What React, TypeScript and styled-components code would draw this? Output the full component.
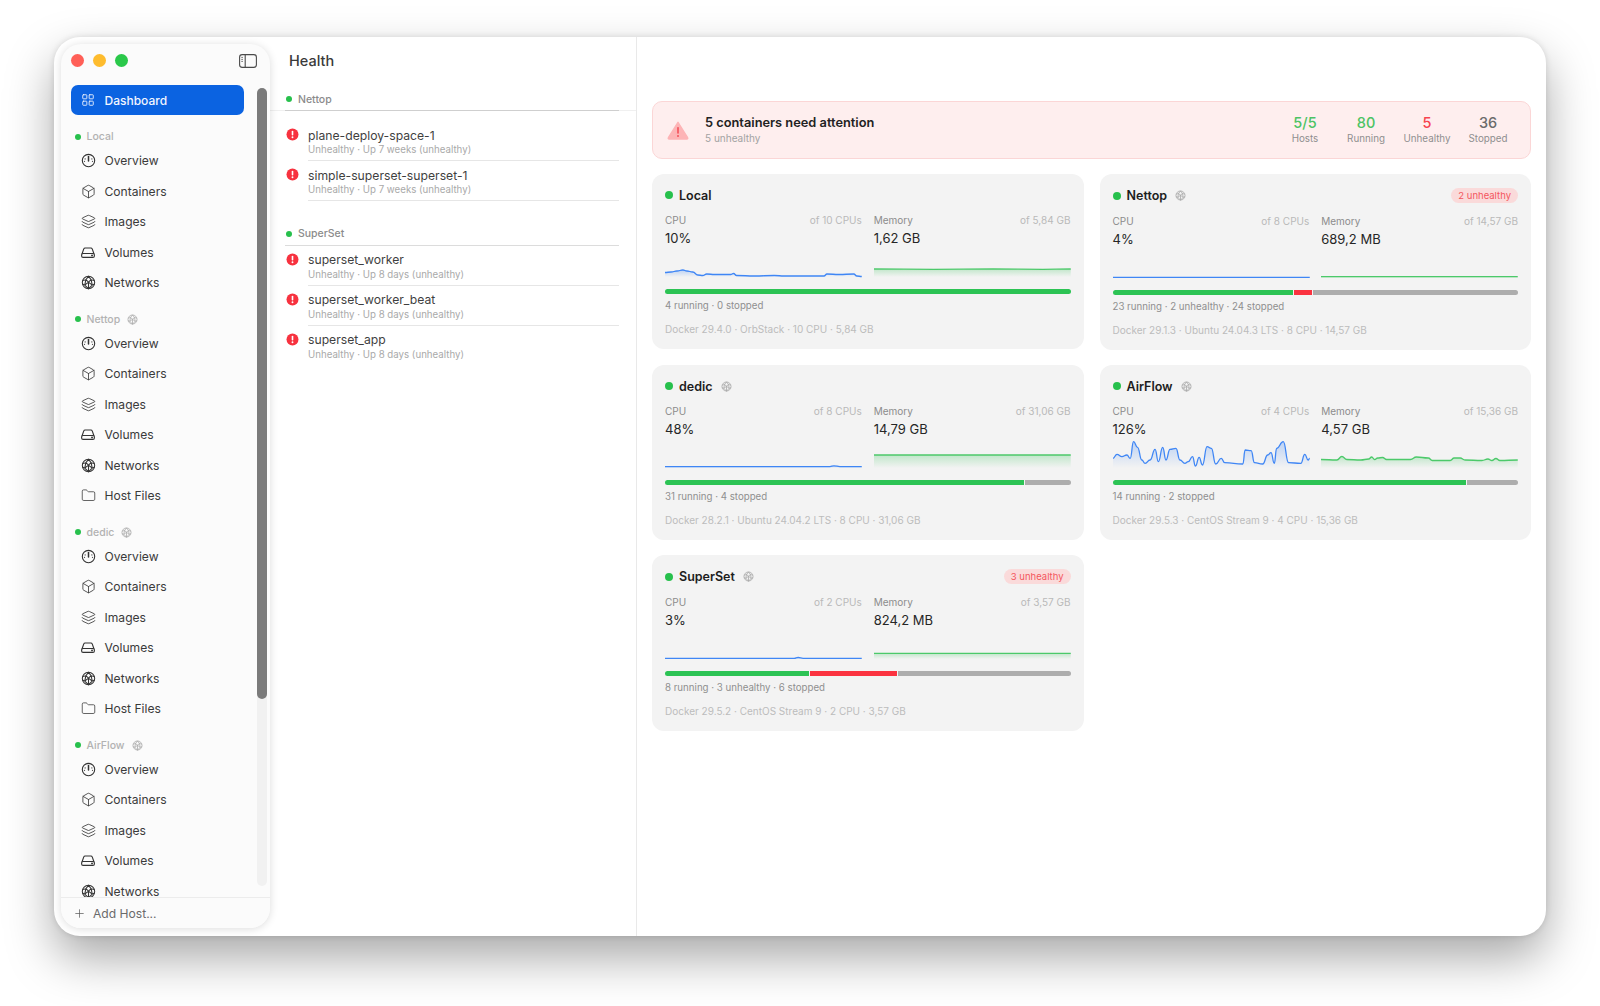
import React from "react";
import styled, { createGlobalStyle } from "styled-components";
import { Box, Folder, Layers, LayoutGrid, Plus } from "lucide-react";

const GlobalStyle = createGlobalStyle`
  html, body { margin: 0; padding: 0; background: #fff; }
  body { font-family: Inter, "Noto Sans", "Liberation Sans", sans-serif; -webkit-font-smoothing: antialiased; }
`;

type Point = [number, number];

// sparkline boxes are 198x26, segments get horizontal tangents so peaks stay where they are
const toPath = (pts: Point[]) =>
  pts
    .map((p, i) => {
      if (i === 0) return `M${p[0]} ${p[1]}`;
      const prev = pts[i - 1];
      const mid = (prev[0] + p[0]) / 2;
      return `C${mid} ${prev[1]} ${mid} ${p[1]} ${p[0]} ${p[1]}`;
    })
    .join(" ");

const flat = (y: number, bumps: Point[] = []): Point[] => [[0, y], ...bumps, [198, y]];

const airflowCpu: Point[] = ([
  [98, 295], [110, 283], [125, 290], [140, 285], [150, 295], [160, 245], [172, 262], [185, 300], [195, 310], [210, 300],
  [225, 268], [235, 305], [248, 262], [258, 300], [270, 268], [288, 265], [300, 300], [315, 310], [325, 305], [338, 290],
  [347, 318], [358, 292], [368, 315], [382, 260], [395, 265], [408, 312], [425, 295], [435, 308], [490, 312], [497, 270],
  [515, 272], [525, 308], [550, 312], [565, 285], [575, 278], [585, 310], [592, 265], [612, 245], [628, 308], [665, 310],
  [677, 283], [687, 300], [692, 295],
] as Point[]).map(([x, y]) => [(x - 98) / 3, (y - 246) / 3]);

const airflowMem: Point[] = [
  [0, 17.5], [16, 18], [21, 14.5], [26, 17.5], [40, 18], [48, 17], [51, 15], [54, 17.5], [57, 16], [62, 15.5], [66, 17.5],
  [90, 17.5], [96, 15], [108, 16], [112, 18.5], [130, 18.5], [134, 16], [140, 16], [145, 18], [162, 18.5], [168, 17],
  [172, 18.5], [176, 16.5], [180, 18.5], [198, 18],
];

const localCpu: Point[] = [
  [0, 21.5], [6, 21], [12, 20], [18, 19], [22, 20], [28, 21], [33, 24], [38, 24.5], [42, 23], [50, 23.5], [66, 23.5], [69, 22.5],
  [72, 24.5], [90, 25], [110, 24.5], [120, 25], [160, 25], [163, 23], [175, 23.5], [190, 23], [193, 25], [198, 25.5],
];

const hosts = [
  {
    name: "Local", remote: false, cpu: "10%", cpuOf: "of 10 CPUs", mem: "1,62 GB", memOf: "of 5,84 GB",
    cpuLine: localCpu, memLine: flat(18, [[60, 18.3], [120, 18], [170, 18.3]]),
    bar: [1, 0, 0], summary: "4 running · 0 stopped", info: "Docker 29.4.0 · OrbStack · 10 CPU · 5,84 GB", badge: "",
  },
  {
    name: "Nettop", remote: true, cpu: "4%", cpuOf: "of 8 CPUs", mem: "689,2 MB", memOf: "of 14,57 GB",
    cpuLine: flat(25.4), memLine: flat(24.7),
    bar: [0.447, 0.045, 0.508], summary: "23 running · 2 unhealthy · 24 stopped", info: "Docker 29.1.3 · Ubuntu 24.04.3 LTS · 8 CPU · 14,57 GB", badge: "2 unhealthy",
  },
  {
    name: "dedic", remote: true, cpu: "48%", cpuOf: "of 8 CPUs", mem: "14,79 GB", memOf: "of 31,06 GB",
    cpuLine: flat(24.6, [[166, 24.6], [170, 23.8], [176, 24.6]]), memLine: flat(13),
    bar: [0.887, 0, 0.113], summary: "31 running · 4 stopped", info: "Docker 28.2.1 · Ubuntu 24.04.2 LTS · 8 CPU · 31,06 GB", badge: "",
  },
  {
    name: "AirFlow", remote: true, cpu: "126%", cpuOf: "of 4 CPUs", mem: "4,57 GB", memOf: "of 15,36 GB",
    cpuLine: airflowCpu, memLine: airflowMem,
    bar: [0.874, 0, 0.126], summary: "14 running · 2 stopped", info: "Docker 29.5.3 · CentOS Stream 9 · 4 CPU · 15,36 GB", badge: "",
  },
  {
    name: "SuperSet", remote: true, cpu: "3%", cpuOf: "of 2 CPUs", mem: "824,2 MB", memOf: "of 3,57 GB",
    cpuLine: flat(25.4, [[130, 25.4], [134, 24.5], [139, 25.4]]), memLine: flat(20.3),
    bar: [0.358, 0.215, 0.427], summary: "8 running · 3 unhealthy · 6 stopped", info: "Docker 29.5.2 · CentOS Stream 9 · 2 CPU · 3,57 GB", badge: "3 unhealthy",
  },
];

const navGroups = [
  { name: "Local", remote: false, files: false },
  { name: "Nettop", remote: true, files: true },
  { name: "dedic", remote: true, files: true },
  { name: "AirFlow", remote: true, files: false },
];

const healthGroups = [
  {
    name: "Nettop",
    first: true,
    items: [
      { name: "plane-deploy-space-1", sub: "Unhealthy · Up 7 weeks (unhealthy)", line: true },
      { name: "simple-superset-superset-1", sub: "Unhealthy · Up 7 weeks (unhealthy)", line: true },
    ],
  },
  {
    name: "SuperSet",
    first: false,
    items: [
      { name: "superset_worker", sub: "Unhealthy · Up 8 days (unhealthy)", line: true },
      { name: "superset_worker_beat", sub: "Unhealthy · Up 8 days (unhealthy)", line: true },
      { name: "superset_app", sub: "Unhealthy · Up 8 days (unhealthy)", line: false },
    ],
  },
];

const GaugeIcon = () => (
  <svg width="15" height="15" viewBox="0 0 16 16" fill="none" stroke="currentColor" strokeWidth="1.2" strokeLinecap="round">
    <circle cx="8" cy="8" r="6.6" />
    <path d="M8 3.8V8.6" strokeWidth="1.6" />
    <path d="M4.4 6.2v.1M11.6 6.2v.1M3.8 8.8v.1M12.2 8.8v.1" />
  </svg>
);

const DriveIcon = () => (
  <svg width="16" height="15" viewBox="0 0 16 16" fill="none" stroke="currentColor" strokeWidth="1.2" strokeLinejoin="round">
    <path d="M1.6 9.6 3.4 4.4C3.7 3.6 4.2 3.2 5 3.2h6c.8 0 1.3.4 1.6 1.2l1.8 5.2" />
    <rect x="1.2" y="9" width="13.6" height="4.2" rx="1.5" />
    <circle cx="12.3" cy="11.1" r=".4" fill="currentColor" />
  </svg>
);

const GlobeIcon = ({ size = 15 }: { size?: number }) => (
  <svg width={size} height={size} viewBox="0 0 16 16" fill="none" stroke="currentColor" strokeWidth="1.1">
    <circle cx="8" cy="8" r="6.6" />
    <path d="M8 1.4 5.2 5l2.8 2.6L10.8 5 8 1.4ZM8 7.6v7M5.2 5 1.8 6M10.8 5l3.4 1M5.2 5 4 10.8l4 3.8 4-3.8L10.8 5M1.6 9.6 4 10.8M14.4 9.6 12 10.8M4 10.8 8 7.6l4 3.2" />
  </svg>
);

const SidebarIcon = () => (
  <svg width="18" height="14" viewBox="0 0 18 14" fill="none" stroke="#4a4a4a" strokeWidth="1.1">
    <rect x=".6" y=".6" width="16.8" height="12.8" rx="2.6" />
    <path d="M6.2.6v12.8" />
    <path d="M2.4 3.4h1.4M2.4 5.4h1.4M2.4 7.4h1.4" strokeWidth=".9" />
  </svg>
);

const AlertDot = () => (
  <svg width="13" height="13" viewBox="0 0 13 13">
    <circle cx="6.5" cy="6.5" r="6" fill="#f7323f" />
    <rect x="5.7" y="2.7" width="1.6" height="4.8" rx=".8" fill="#fff" />
    <circle cx="6.5" cy="9.3" r=".95" fill="#fff" />
  </svg>
);

const WarningIcon = () => (
  <svg width="22" height="19" viewBox="0 0 24 21">
    <path d="M12 1.5 22.6 18.4a1 1 0 0 1-.9 1.6H2.3a1 1 0 0 1-.9-1.6L12 1.5Z" fill="#fdb4b6" stroke="#fdb4b6" strokeWidth="1.6" strokeLinejoin="round" />
    <rect x="11.1" y="6.6" width="1.8" height="7.6" rx=".9" fill="#f4505a" />
    <circle cx="12" cy="16.6" r="1.1" fill="#f4505a" />
  </svg>
);

const Spark = ({ points, color, id }: { points: Point[]; color: string; id: string }) => {
  const line = toPath(points);
  return (
    <SparkSvg viewBox="0 0 198 26" preserveAspectRatio="none">
      <defs>
        <linearGradient id={id} x1="0" y1="0" x2="0" y2="1">
          <stop offset="0" stopColor={color} stopOpacity="0.3" />
          <stop offset="1" stopColor={color} stopOpacity="0" />
        </linearGradient>
      </defs>
      <path d={`${line} L198 26 L0 26 Z`} fill={`url(#${id})`} />
      <path d={line} fill="none" stroke={color} strokeWidth="1.3" strokeLinejoin="round" />
    </SparkSvg>
  );
};

export default function App() {
  return (
    <Page>
      <GlobalStyle />
      <Window>
        <Sidebar>
          <SidebarTop>
            <Lights>
              <Light color="#ff5f57" />
              <Light color="#febc2e" />
              <Light color="#2ac84a" />
            </Lights>
            <SidebarIcon />
          </SidebarTop>
          <SidebarScroll>
            <DashboardItem>
              <LayoutGrid size={14} strokeWidth={1.5} />
              Dashboard
            </DashboardItem>
            {navGroups.map((g) => (
              <NavGroup key={g.name}>
                <NavHeading>
                  <Dot size={6} />
                  <span>{g.name}</span>
                  {g.remote && <GlobeIcon size={11} />}
                </NavHeading>
                <NavItem><NavIcon><GaugeIcon /></NavIcon>Overview</NavItem>
                <NavItem><NavIcon><Box size={15} strokeWidth={1.3} /></NavIcon>Containers</NavItem>
                <NavItem><NavIcon><Layers size={15} strokeWidth={1.3} /></NavIcon>Images</NavItem>
                <NavItem><NavIcon><DriveIcon /></NavIcon>Volumes</NavItem>
                <NavItem><NavIcon><GlobeIcon /></NavIcon>Networks</NavItem>
                {g.files && <NavItem><NavIcon><Folder size={15} strokeWidth={1.2} /></NavIcon>Host Files</NavItem>}
              </NavGroup>
            ))}
          </SidebarScroll>
          <ScrollTrack>
            <ScrollThumb />
          </ScrollTrack>
          <SidebarFooter>
            <Plus size={13} strokeWidth={1.3} />
            Add Host...
          </SidebarFooter>
        </Sidebar>

        <ListPane>
          <PaneTitle>Health</PaneTitle>
          {healthGroups.map((g) => (
            <HealthGroup key={g.name}>
              <HealthHeading $first={g.first}>
                <Dot size={6} />
                {g.name}
              </HealthHeading>
              {g.items.map((c) => (
                <HealthRow key={c.name}>
                  <AlertSlot><AlertDot /></AlertSlot>
                  <HealthText $line={c.line}>
                    <HealthName>{c.name}</HealthName>
                    <HealthSub>{c.sub}</HealthSub>
                  </HealthText>
                </HealthRow>
              ))}
            </HealthGroup>
          ))}
        </ListPane>

        <Main>
          <Banner>
            <WarningIcon />
            <BannerText>
              <BannerTitle>5 containers need attention</BannerTitle>
              <BannerSub>5 unhealthy</BannerSub>
            </BannerText>
            <Stats>
              <Stat><StatValue color="#4cc364">5/5</StatValue><StatLabel>Hosts</StatLabel></Stat>
              <Stat><StatValue color="#4cc364">80</StatValue><StatLabel>Running</StatLabel></Stat>
              <Stat><StatValue color="#f7444e">5</StatValue><StatLabel>Unhealthy</StatLabel></Stat>
              <Stat><StatValue color="#6b6b6b">36</StatValue><StatLabel>Stopped</StatLabel></Stat>
            </Stats>
          </Banner>
          <Cards>
            {hosts.map((h) => (
              <Card key={h.name}>
                <CardHead $tall={h.badge !== ""}>
                  <Dot size={8} />
                  <CardName>{h.name}</CardName>
                  {h.remote && <CardGlobe><GlobeIcon size={11} /></CardGlobe>}
                  {h.badge && <Badge>{h.badge}</Badge>}
                </CardHead>
                <Metrics>
                  <Metric>
                    <MetricHead><span>CPU</span><MetricOf>{h.cpuOf}</MetricOf></MetricHead>
                    <MetricValue>{h.cpu}</MetricValue>
                    <Spark points={h.cpuLine} color="#3f86f5" id={`cpu-${h.name}`} />
                  </Metric>
                  <Metric>
                    <MetricHead><span>Memory</span><MetricOf>{h.memOf}</MetricOf></MetricHead>
                    <MetricValue>{h.mem}</MetricValue>
                    <Spark points={h.memLine} color="#4cc96a" id={`mem-${h.name}`} />
                  </Metric>
                </Metrics>
                <Bar>
                  {h.bar[0] > 0 && <Segment color="#2cc354" style={{ flexGrow: h.bar[0] }} />}
                  {h.bar[1] > 0 && <Segment color="#fb3340" style={{ flexGrow: h.bar[1] }} />}
                  {h.bar[2] > 0 && <Segment color="#adadad" style={{ flexGrow: h.bar[2] }} />}
                </Bar>
                <Summary>{h.summary}</Summary>
                <Info>{h.info}</Info>
              </Card>
            ))}
          </Cards>
        </Main>
      </Window>
    </Page>
  );
}

const Page = styled.div`
  width: 1600px;
  height: 1006px;
  box-sizing: border-box;
  padding: 37px 54px 70px;
  overflow: hidden;
  background: #fff;
`;

const Window = styled.div`
  display: flex;
  height: 899px;
  background: #fff;
  border-radius: 26px;
  overflow: hidden;
  box-shadow: 0 22px 48px rgba(0, 0, 0, 0.34), 0 0 6px rgba(0, 0, 0, 0.12);
`;

const Sidebar = styled.aside`
  position: relative;
  display: flex;
  flex-direction: column;
  flex: none;
  width: 209px;
  margin: 7px 0 8px 7px;
  background: #fbfbfb;
  border-radius: 20px;
  overflow: hidden;
  box-shadow: 0 1px 8px rgba(0, 0, 0, 0.14);
`;

const SidebarTop = styled.div`
  display: flex;
  align-items: center;
  justify-content: space-between;
  flex: none;
  height: 41px;
  box-sizing: border-box;
  padding: 0 13px 8px 10px;
`;

const Lights = styled.div`
  display: flex;
  gap: 9px;
`;

const Light = styled.span<{ color: string }>`
  width: 13px;
  height: 13px;
  border-radius: 50%;
  background: ${(p) => p.color};
`;

const SidebarScroll = styled.div`
  flex: 1;
  min-height: 0;
  overflow: hidden;
  padding: 0 26px 0 9.5px;
`;

const DashboardItem = styled.div`
  display: flex;
  align-items: center;
  gap: 9.5px;
  height: 30px;
  margin-bottom: 3.8px;
  padding-left: 10.5px;
  border-radius: 7px;
  background: #0b63e1;
  color: #f2f6ff;
  font-size: 12px;
  font-weight: 500;
`;

const NavGroup = styled.div`
  margin-top: 12.7px;
`;

const NavHeading = styled.div`
  display: flex;
  align-items: center;
  height: 18px;
  padding-left: 4px;
  color: #b2b2b2;
  font-size: 10.5px;
  font-weight: 500;
  svg {
    margin-left: 7px;
    color: #a8a8a8;
  }
  span:nth-child(2) {
    margin-left: 6px;
  }
`;

const NavItem = styled.div`
  display: flex;
  align-items: center;
  height: 30.4px;
  color: #3a3a3a;
  font-size: 12.1px;
`;

const NavIcon = styled.span`
  display: flex;
  align-items: center;
  justify-content: center;
  width: 16px;
  margin: 0 8.5px 0 9.5px;
  color: #333;
`;

const ScrollTrack = styled.div`
  position: absolute;
  top: 44px;
  right: 3px;
  width: 10px;
  height: 798px;
  border-radius: 5px;
  background: #f1f1f1;
`;

const ScrollThumb = styled.div`
  height: 611px;
  border-radius: 5px;
  background: #7b7b7b;
`;

const SidebarFooter = styled.div`
  display: flex;
  align-items: center;
  gap: 7px;
  flex: none;
  height: 31px;
  box-sizing: border-box;
  padding: 0 0 0 12px;
  background: #fbfbfb;
  border-top: 1px solid #ececec;
  color: #6a6a6a;
  font-size: 12.1px;
  svg {
    color: #555;
  }
`;

const ListPane = styled.section`
  flex: none;
  width: 367px;
  box-sizing: border-box;
  padding: 0 17px 0 15px;
  border-right: 1px solid #e9e9e9;
`;

const PaneTitle = styled.h1`
  margin: 0;
  height: 51px;
  padding: 14px 0 0 4px;
  box-sizing: border-box;
  color: #3a3a3a;
  font-size: 14.5px;
  font-weight: 500;
  line-height: 20px;
`;

const HealthGroup = styled.div`
  margin-bottom: 21.7px;
`;

const HealthHeading = styled.div<{ $first: boolean }>`
  position: relative;
  display: flex;
  align-items: center;
  gap: 6px;
  height: 22px;
  margin-bottom: ${(p) => (p.$first ? "10px" : "0")};
  padding-left: 1px;
  color: #8b8b8b;
  font-size: 10.5px;
  font-weight: 500;
  border-bottom: 1px solid #dcdcdc;
  &::after {
    content: "";
    display: ${(p) => (p.$first ? "block" : "none")};
    position: absolute;
    left: -15px;
    right: -17px;
    bottom: -1px;
    height: 1px;
    background: rgba(0, 0, 0, 0.06);
  }
`;

const HealthRow = styled.div`
  display: flex;
  height: 40px;
`;

const AlertSlot = styled.span`
  flex: none;
  width: 23px;
  padding: 7px 0 0 1px;
  box-sizing: border-box;
  svg {
    display: block;
  }
`;

const HealthText = styled.div<{ $line: boolean }>`
  flex: 1;
  padding-top: 6.5px;
  border-bottom: 1px solid ${(p) => (p.$line ? "#e6e6e6" : "transparent")};
`;

const HealthName = styled.div`
  color: #3f3f3f;
  font-size: 12.2px;
  line-height: 15px;
`;

const HealthSub = styled.div`
  margin-top: 0.5px;
  color: #a9a9a9;
  font-size: 9.7px;
  line-height: 14px;
`;

const Main = styled.main`
  flex: 1;
  min-width: 0;
  padding: 64px 15px 0 15px;
`;

const Banner = styled.div`
  display: flex;
  align-items: center;
  height: 58px;
  box-sizing: border-box;
  padding: 0 11.5px 0 14px;
  border: 1px solid #fbd6d6;
  border-radius: 10px;
  background: #feeeee;
`;

const BannerText = styled.div`
  flex: 1;
  margin-left: 16px;
`;

const BannerTitle = styled.div`
  color: #222;
  font-size: 12.8px;
  font-weight: 600;
  line-height: 16px;
`;

const BannerSub = styled.div`
  color: #a3a3a3;
  font-size: 10px;
  line-height: 14px;
`;

const Stats = styled.div`
  display: flex;
`;

const Stat = styled.div`
  display: flex;
  flex-direction: column;
  align-items: center;
  width: 61px;
`;

const StatValue = styled.div<{ color: string }>`
  color: ${(p) => p.color};
  font-size: 14.5px;
  font-weight: 500;
  line-height: 18px;
`;

const StatLabel = styled.div`
  color: #8f8f8f;
  font-size: 9.8px;
  line-height: 14px;
`;

const Cards = styled.div`
  display: grid;
  grid-template-columns: 1fr 1fr;
  gap: 15px 16px;
  margin-top: 15px;
  align-items: start;
`;

const Card = styled.article`
  box-sizing: border-box;
  padding: 0 13px 13.5px;
  border-radius: 12px;
  background: #f3f3f3;
`;

const CardHead = styled.div<{ $tall: boolean }>`
  display: flex;
  align-items: center;
  height: ${(p) => (p.$tall ? "43px" : "42px")};
  margin-bottom: -2.5px;
`;

const CardName = styled.span`
  margin-left: 6px;
  color: #1d1d1d;
  font-size: 12.5px;
  font-weight: 600;
`;

const CardGlobe = styled.span`
  display: flex;
  margin-left: 8px;
  color: #a5a5a5;
`;

const Badge = styled.span`
  margin-left: auto;
  padding: 0 7px;
  height: 15.5px;
  border-radius: 8px;
  background: #fadada;
  color: #f4565d;
  font-size: 9.5px;
  line-height: 15.5px;
`;

const Metrics = styled.div`
  display: grid;
  grid-template-columns: 1fr 1fr;
  gap: 12px;
`;

const Metric = styled.div`
  min-width: 0;
`;

const MetricHead = styled.div`
  display: flex;
  justify-content: space-between;
  height: 13px;
  color: #8c8c8c;
  font-size: 10px;
  line-height: 13px;
`;

const MetricOf = styled.span`
  color: #b9b9b9;
`;

const MetricValue = styled.div`
  margin-top: 1px;
  height: 20px;
  color: #262626;
  font-size: 13px;
  font-weight: 400;
  line-height: 20px;
`;

const SparkSvg = styled.svg`
  display: block;
  width: 100%;
  height: 26px;
  margin-top: 3.5px;
  overflow: visible;
`;

const Bar = styled.div`
  display: flex;
  gap: 1px;
  height: 5px;
  margin-top: 12px;
  border-radius: 3px;
  overflow: hidden;
`;

const Segment = styled.span<{ color: string }>`
  flex-basis: 0;
  background: ${(p) => p.color};
`;

const Summary = styled.div`
  margin-top: 4.5px;
  color: #8f8f8f;
  font-size: 9.7px;
  line-height: 14px;
`;

const Info = styled.div`
  margin-top: 9px;
  color: #bcbcbc;
  font-size: 10px;
  line-height: 14px;
`;

const Dot = styled.span<{ size: number }>`
  flex: none;
  width: ${(p) => p.size}px;
  height: ${(p) => p.size}px;
  border-radius: 50%;
  background: #27c04c;
`;
